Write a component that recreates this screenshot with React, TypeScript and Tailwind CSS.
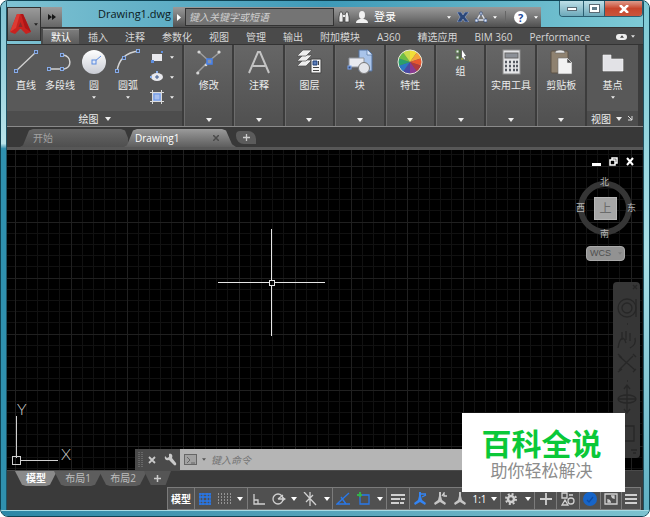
import type { ReactNode } from "react";
import clsx from "clsx";

const menuTabs = ["默认", "插入", "注释", "参数化", "视图", "管理", "输出", "附加模块", "A360", "精选应用", "BIM 360", "Performance"];

function Caret({ small = false, className }: { small?: boolean; className?: string }) {
  return (
    <svg viewBox="0 0 6 4" className={clsx("shrink-0", small ? "w-[4px] h-[3px]" : "w-[6px] h-[4px]", className)}>
      <path d="M0 0h6L3 4z" fill="currentColor" />
    </svg>
  );
}

function Node({ x, y }: { x: number; y: number }) {
  return <rect x={x - 1.5} y={y - 1.5} width="3" height="3" fill="#4a5468" stroke="#86abe8" />;
}

const LineIcon = () => (
  <svg className="w-[26px] h-[26px]" viewBox="0 0 26 26">
    <path d="M3 22L23 3" stroke="#d2d2d2" strokeWidth="1.3" />
    <Node x={3} y={22} />
    <Node x={23} y={3} />
  </svg>
);

const PolylineIcon = () => (
  <svg className="w-[26px] h-[26px]" viewBox="0 0 26 26" fill="none">
    <path d="M2 20H17c8-1 8-13-1-14" stroke="#d2d2d2" strokeWidth="1.5" />
    <Node x={2} y={20} />
    <Node x={15} y={20} />
    <Node x={15} y={6} />
  </svg>
);

const CircleIcon = () => (
  <svg className="w-[26px] h-[26px]" viewBox="0 0 26 26">
    <defs>
      <linearGradient id="disc" x1="0" y1="0" x2="0" y2="1">
        <stop offset="0" stopColor="#fff" />
        <stop offset="1" stopColor="#c9ccd4" />
      </linearGradient>
    </defs>
    <circle cx="13" cy="13" r="12" fill="url(#disc)" />
    <path d="M13 13L20 7" stroke="#5b8be0" />
    <rect x="11" y="11" width="4" height="4" fill="#dfe7f5" stroke="#5b8be0" />
  </svg>
);

const ArcIcon = () => (
  <svg className="w-[26px] h-[26px]" viewBox="0 0 26 26" fill="none">
    <path d="M2 23C3 11 11 3 24 2" stroke="#d2d2d2" strokeWidth="1.5" />
    <Node x={2} y={22} />
    <Node x={9} y={9} />
    <Node x={23} y={2} />
  </svg>
);

const ModifyIcon = () => (
  <svg className="w-[26px] h-[26px]" viewBox="0 0 26 26">
    <path d="M3 3L13 12 24 3M13 12L1 24" stroke="#9d9d9d" strokeWidth="1.5" fill="none" />
    <g fill="#d6d6d6">
      <circle cx="3" cy="3" r="1.6" />
      <circle cx="23" cy="3" r="1.6" />
      <circle cx="1.8" cy="24" r="1.6" />
      <circle cx="10" cy="16" r="1.3" />
    </g>
    <rect x="11" y="10" width="5" height="5" fill="#8a93a8" stroke="#4380ee" strokeWidth="1.5" />
  </svg>
);

const AnnotateIcon = () => (
  <svg className="w-[26px] h-[26px]" viewBox="0 0 26 26">
    <path d="M3 24L12 3h2l9 21M7 17h12" stroke="#c3c3c3" strokeWidth="2" fill="none" />
  </svg>
);

const LayersIcon = () => (
  <svg className="w-[26px] h-[26px]" viewBox="0 0 26 26">
    <g fill="#eeeeee" stroke="#4a4a4a" strokeWidth=".7">
      <path d="M1 17h9l6-6H7z" />
      <path d="M1 12h9l6-6H7z" />
      <path d="M1 7h9l6-6H7z" />
    </g>
    <path d="M15 10h10v14H15z" fill="#f4f4f4" stroke="#444" />
    <path d="M17 12h4v4h-4z" fill="#5a7cb8" stroke="#1d3c77" />
    <path d="M22.500 12v4M17 18.500h6M17 21.500h6" stroke="#444" />
  </svg>
);

const BlockIcon = () => (
  <svg className="w-[26px] h-[26px]" viewBox="0 0 26 26">
    <path d="M12 1h9l4 4v17H12z" fill="#a9c4ea" stroke="#55739f" />
    <path d="M20 1v5h5" fill="#dbe8fb" stroke="#55739f" strokeWidth=".7" />
    <path d="M2 9h15v9H2z" fill="#e8eaf0" stroke="#8f949d" />
    <circle cx="17" cy="19" r="5.500" fill="#e3e5ea" stroke="#777" />
    <rect x="1" y="17" width="3" height="3" fill="#354d7c" stroke="#7aa4ec" />
  </svg>
);

const wheel = [
  "#f2de38", "#f4a33c", "#e8572f", "#b23a3c", "#8a3b91", "#4a49a5", "#2c77c4", "#2aa06b", "#6dbd45", "#c7dc4b",
];

function WheelIcon() {
  return (
    <svg className="w-[26px] h-[26px]" viewBox="-13 -13 26 26">
      {wheel.map((color, i) => {
        const a = ((i * 36 - 90) * Math.PI) / 180;
        const b = (((i + 1) * 36 - 90) * Math.PI) / 180;
        return (
          <path
            key={color}
            d={`M0 0L${12 * Math.cos(a)} ${12 * Math.sin(a)}A12 12 0 0 1 ${12 * Math.cos(b)} ${12 * Math.sin(b)}z`}
            fill={color}
          />
        );
      })}
      <circle r="12" fill="none" stroke="#e9e9dc" strokeWidth="1" />
    </svg>
  );
}

const GroupIcon = () => (
  <svg className="w-[12px] h-[12px]" viewBox="0 0 12 12">
    <path d="M1 1h3v3H1zM1 7h3v3H1z" fill="#e8eef0" stroke="#5c7b4e" />
    <path d="M5 1v9" stroke="#3f6b33" />
    <path d="M7 1l4 6H9l1 3-1 .5L8 8 7 9z" fill="#fff" />
    <path d="M7 9v2" stroke="#c6c93d" />
  </svg>
);

const CalcIcon = () => (
  <svg className="w-[26px] h-[26px]" viewBox="0 0 26 26">
    <rect x="5" y="1" width="17" height="24" fill="#e4e5e7" stroke="#8c8c8c" />
    <rect x="7" y="4" width="13" height="5" fill="#8c9097" stroke="#666" />
    <path
      d="M7 13h2m2 0h2m2 0h2m1 0h2M7 17h2m2 0h2m2 0h2m1 0h2M7 21h2m2 0h2m2 0h2m1 0h2"
      stroke="#555a62"
      strokeWidth="2.500"
    />
  </svg>
);

const ClipboardIcon = () => (
  <svg className="w-[26px] h-[26px]" viewBox="0 0 26 26">
    <rect x="3" y="2" width="17" height="22" rx="1" fill="#8f8270" stroke="#5c5347" />
    <path d="M7 4c0-2 2-3 5-3s5 1 5 3z" fill="#e9e9e9" stroke="#666" strokeWidth=".6" />
    <path d="M10 9h9l5 5v11H10z" fill="#f3f3f3" stroke="#6d6d6d" strokeWidth=".6" />
    <path d="M19 9v5h5z" fill="#4b4b4b" stroke="#eee" strokeWidth=".6" />
  </svg>
);

const BaseIcon = () => (
  <svg className="w-[26px] h-[26px]" viewBox="0 0 26 26">
    <path d="M3 6h8v4h12v12H3z" fill="#e2e2e6" stroke="#f5f5f5" strokeWidth=".6" />
  </svg>
);

const smallTools = [
  {
    name: "矩形",
    icon: (
      <svg className="w-[14px] h-[14px]" viewBox="0 0 14 14">
        <rect x="2" y="4" width="10" height="7" fill="#e8e8ec" />
        <path d="M1 10h3v3H1zM11 1h2v2h-2z" fill="#5f8edd" />
      </svg>
    ),
  },
  {
    name: "椭圆",
    icon: (
      <svg className="w-[14px] h-[14px]" viewBox="0 0 14 14">
        <ellipse cx="7" cy="7" rx="6" ry="4" fill="#e8e8ec" />
        <path d="M7 5v4M5 7h4" stroke="#38598e" />
        <path d="M0 6h2v2H0zM6 1h2v2H6z" fill="#8bb0ee" />
      </svg>
    ),
  },
  {
    name: "图案填充",
    icon: (
      <svg className="w-[14px] h-[14px]" viewBox="0 0 14 14">
        <rect x="3" y="3" width="8" height="8" fill="#a9c0ee" />
        <path d="M2.500 0v14M11.500 0v14M0 2.500h14M0 11.500h14" stroke="#dcdcdc" />
        <rect x="4" y="4" width="6" height="6" fill="none" stroke="#6d96e4" />
      </svg>
    ),
  },
];

const drawTools = [
  { label: "直线", icon: <LineIcon />, menu: false },
  { label: "多段线", icon: <PolylineIcon />, menu: false },
  { label: "圆", icon: <CircleIcon />, menu: true },
  { label: "圆弧", icon: <ArcIcon />, menu: true },
];

const panels = [
  { label: "修改", icon: <ModifyIcon /> },
  { label: "注释", icon: <AnnotateIcon /> },
  { label: "图层", icon: <LayersIcon /> },
  { label: "块", icon: <BlockIcon /> },
  { label: "特性", icon: <WheelIcon /> },
  { label: "组", icon: <GroupIcon /> },
  { label: "实用工具", icon: <CalcIcon /> },
  { label: "剪贴板", icon: <ClipboardIcon /> },
];

function Header() {
  return (
    <header className="flex">
      <button
        aria-label="应用程序菜单"
        className="mt-[6px] w-[34px] h-[34px] shrink-0 flex items-center justify-center gap-[3px] border border-[#303030] bg-linear-to-b from-[#9a9a9a] to-[#5c5c5c] text-[#222]"
      >
        <svg className="w-[21px] h-[22px]" viewBox="0 0 21 22">
          <path d="M7 1h6l8 18-5 2-5-5h-1l-5 5-5-2z" fill="#c9221f" />
          <path d="M7 1h3L6 15l-6 4z" fill="#dd3b33" />
          <path d="M13 1l8 18-6-4-4-14z" fill="#ad1517" />
          <path d="M10.500 9l2 5h-4z" fill="#8a2a2a" />
        </svg>
        <Caret small />
      </button>

      <div className="flex-1 min-w-0">
        <div className="flex items-end h-[26px]">
          <button aria-label="快速访问" className="w-[21px] h-[20px] shrink-0 flex items-center justify-center bg-linear-to-b from-[#9b9b9b] to-[#666] text-[#161616]">
            <svg className="w-[8px] h-[6px]" viewBox="0 0 8 6">
              <path d="M0 0l4 3-4 3zM4 0l4 3-4 3z" fill="currentColor" />
            </svg>
          </button>
          <h1 className="w-[111px] shrink-0 pl-[36px] text-[11px] leading-[16px] mb-[5px] text-[#0b1b22] whitespace-nowrap">Drawing1.dwg</h1>
          <div className="flex flex-1 min-w-0 items-center h-[20px] bg-linear-to-b from-[#9a9a9a] via-[#777] to-[#505050] text-white">
            <button aria-label="展开" className="w-[12px] h-full shrink-0 flex items-center justify-center">
              <svg className="w-[4px] h-[7px]" viewBox="0 0 4 7"><path d="M0 0l4 3.500L0 7z" fill="#fff" /></svg>
            </button>
            <input
              type="text"
              aria-label="搜索"
              placeholder="键入关键字或短语"
              className="w-[149px] h-[18px] min-w-0 px-[3px] border border-[#333] bg-[#747474] text-[10px] italic placeholder:text-[#cfcfcf]"
            />
            <button aria-label="查找" className="w-[20px] shrink-0 flex justify-center">
              <svg className="w-[12px] h-[12px]" viewBox="0 0 12 12">
                <path d="M2 1h2l1 3v7H1V6zM8 1h2l1 5v5H7V4z" fill="#eee" stroke="#343434" strokeWidth=".7" />
                <path d="M5 5h2" stroke="#eee" strokeWidth="2" />
              </svg>
            </button>
            <button className="shrink-0 flex items-center gap-1 text-[11px] leading-[14px]">
              <svg className="w-[16px] h-[12px]" viewBox="0 0 16 12">
                <ellipse cx="8" cy="4" rx="3" ry="4" fill="#f2f2f2" />
                <path d="M2 12c0-3 3-4 5-4h2c2 0 5 1 5 4z" fill="#f2f2f2" />
              </svg>
              登录
            </button>
            <div className="flex-1" />
            <Caret small />
            <button aria-label="Exchange" className="w-[24px] shrink-0 flex justify-center">
              <svg className="w-[12px] h-[10px]" viewBox="0 0 12 10">
                <path d="M0 0h4l2 3 2-3h4L8 5l4 5H8L6 7l-2 3H0l3-5z" fill="#2b4779" stroke="#a9bbdd" strokeWidth=".5" />
              </svg>
            </button>
            <button aria-label="保持连接" className="shrink-0 flex items-center gap-[6px]">
              <svg className="w-[12px] h-[12px]" viewBox="0 0 12 12">
                <path d="M6 2l4 7H2z" fill="none" stroke="#dcdfe8" strokeWidth="1.500" />
                <path d="M5 1h2v3H5zM0 8h3v3H0zM9 8h3v3H9z" fill="#dde6f8" stroke="#2c4577" strokeWidth=".7" />
              </svg>
              <Caret small />
            </button>
            <span className="w-px h-[12px] mx-2 bg-[#666]" />
            <button aria-label="帮助" className="shrink-0 flex items-center gap-[7px] pr-[3px]">
              <span className="w-[13px] h-[13px] rounded-full bg-white text-[#1f4b99] text-[11px] leading-[13px] font-bold text-center">?</span>
              <Caret small />
            </button>
          </div>
          <div className="w-[18px] shrink-0" />
          <div className="flex shrink-0 self-start h-[16px] border border-t-0 border-[#2b5f72] rounded-b-sm overflow-hidden">
            <button aria-label="最小化" className="w-[23px] flex items-center justify-center bg-linear-to-b from-[#bfe0e8] to-[#6ca9ba]">
              <span className="w-[10px] h-[4px] bg-white border border-[#5b6b75]" />
            </button>
            <button aria-label="最大化" className="w-[22px] flex items-center justify-center border-x border-[#2b5f72] bg-linear-to-b from-[#bfe0e8] to-[#6ca9ba]">
              <span className="w-[9px] h-[7px] border-2 border-white bg-[#607c8a] outline outline-[#5b6b75]" />
            </button>
            <button aria-label="关闭" className="w-[37px] flex items-center justify-center bg-linear-to-b from-[#dd9b8c] via-[#c7452c] to-[#c9563c]">
              <svg className="w-[10px] h-[8px]" viewBox="0 0 10 8">
                <path d="M1 0l8 8M9 0L1 8" stroke="#fff" strokeWidth="2.500" />
              </svg>
            </button>
          </div>
        </div>

        <nav className="flex h-[17px] items-end gap-px pl-[2px] bg-[#4a4a4a] border-t border-[#333]">
          {menuTabs.map((tab, i) => (
            <button
              key={tab}
              className={clsx(
                "h-[15px] px-2 text-[10px] leading-[12px] whitespace-nowrap",
                i === 0 ? "bg-linear-to-b from-[#7c7c7c] to-[#5b5b5b] border-t border-[#999] text-white" : "border-t border-transparent text-[#d6d6d6]",
              )}
            >
              {tab}
            </button>
          ))}
          <button aria-label="最小化功能区" className="ml-auto mr-2 h-[15px] flex items-center gap-1 text-[#ddd]">
            <span className="w-[11px] h-[6px] rounded-sm bg-[#eee] flex items-center justify-center text-[#444]">
              <Caret small className="rotate-180" />
            </span>
            <Caret small />
          </button>
        </nav>
      </div>
    </header>
  );
}

function Ribbon() {
  return (
    <section className="flex gap-[2px] h-[83px] pr-[5px] bg-[#3c3c3c] border-t border-b border-t-[#333] border-b-[#8a8a8a] text-[10px] leading-[14px] text-[#ececec]">
      <div className="w-[175px] shrink-0 flex flex-col bg-[#595959]">
        <div className="flex-1 flex pl-[2px] pt-[4px]">
          {drawTools.map((t) => (
            <button key={t.label} className="w-[34px] shrink-0 flex flex-col items-center">
              {t.icon}
              <span className="mt-[3px] whitespace-nowrap">{t.label}</span>
              {t.menu && <Caret small className="mt-[4px]" />}
            </button>
          ))}
          <div className="flex flex-col gap-[6px] pt-px ml-[5px]">
            {smallTools.map((t) => (
              <button key={t.name} aria-label={t.name} className="flex items-center gap-[6px]">
                {t.icon}
                <Caret small />
              </button>
            ))}
          </div>
        </div>
        <button className="h-[15px] flex items-center justify-center gap-[6px] bg-[#4d4d4d]">
          绘图 <Caret />
        </button>
      </div>

      {panels.map((p) => (
        <button
          key={p.label}
          className="flex-1 min-w-0 flex flex-col items-center py-[4px] bg-linear-to-b from-[#666] to-[#505050] border-l border-[#6c6c6c]"
        >
          {p.icon}
          <span className="mt-[3px] whitespace-nowrap">{p.label}</span>
          <Caret className="mt-auto" />
        </button>
      ))}

      <div className="w-[51px] shrink-0 flex flex-col bg-[#585858]">
        <button className="flex-1 flex flex-col items-center pt-[4px]">
          <BaseIcon />
          <span className="mt-[3px]">基点</span>
          <Caret small className="mt-[4px]" />
        </button>
        <button className="h-[15px] flex items-center pl-[4px] gap-[5px] bg-[#4d4d4d]">
          视图 <Caret />
          <svg className="w-[5px] h-[5px] ml-px" viewBox="0 0 5 5"><path d="M0 0l4 4M4 0v4H0" stroke="#ddd" fill="none" /></svg>
        </button>
      </div>
    </section>
  );
}

function FileTabs() {
  return (
    <div className="flex items-end h-[23px] pl-[13px] bg-[#383838] border-b-3 border-[#575757] leading-[16px]">
      <button className="w-[108px] h-[18px] pl-[13px] text-left text-[10px] text-[#a2a2a2] bg-linear-to-b from-[#666] to-[#4f4f4f] [clip-path:polygon(0_100%,3px_90%,9px_8%,13px_0,101px_0,105px_8%,108px_50%,100%_100%)]">
        开始
      </button>
      <div className="-ml-[4px] w-[112px] h-[18px] pl-[11px] pr-[17px] flex items-center justify-between bg-linear-to-b from-[#9b9b9b] to-[#5e5e5e] text-white [clip-path:polygon(0_100%,3px_90%,9px_8%,13px_0,98px_0,102px_8%,108px_85%,100%_100%)]">
        <button className="text-[10px]">Drawing1</button>
        <button aria-label="关闭图形" className="text-[#4b4b4b]">
          <svg className="w-[6px] h-[6px]" viewBox="0 0 7 7"><path d="M0 0l7 7M7 0L0 7" stroke="currentColor" strokeWidth="1.800" /></svg>
        </button>
      </div>
      <button aria-label="新图形" className="mb-[3px] w-[20px] h-[13px] rounded-tl-sm rounded-tr-lg rounded-bl-lg bg-[#5b5b5b] flex items-center justify-center">
        <svg className="w-[7px] h-[7px]" viewBox="0 0 7 7"><path d="M3.500 0v7M0 3.500h7" stroke="#ccc" strokeWidth="1.300" /></svg>
      </button>
    </div>
  );
}

function ViewCube() {
  return (
    <div className="absolute right-[7px] top-[27px] w-[62px] h-[62px] text-[9px] leading-[10px] text-[#b5b5b5]">
      <svg className="absolute inset-0" viewBox="0 0 62 62">
        <circle cx="31" cy="31" r="24" fill="none" stroke="#353535" strokeWidth="6" />
      </svg>
      <button className="absolute left-[20px] top-[20px] w-[23px] h-[23px] bg-[#a6a6a6] border border-[#b8b8b8] text-[12px] leading-[20px] text-[#6b6b6b]">上</button>
      <span className="absolute left-[26px] top-0">北</span>
      <span className="absolute left-[26px] bottom-0">南</span>
      <span className="absolute left-[2px] top-[26px]">西</span>
      <span className="absolute right-0 top-[26px]">东</span>
    </div>
  );
}

function NavBar() {
  return (
    <div className="absolute right-[3px] top-[132px] w-[27px] h-[176px] rounded-sm bg-[#363636]">
      <svg className="w-full h-full" viewBox="0 0 27 176" fill="none" stroke="#272727" strokeWidth="1.300">
        <path d="M20 3l4 4M24 3l-4 4" />
        <circle cx="14" cy="26" r="9" />
        <circle cx="14" cy="26" r="5" />
        <path d="M23 17v18M14 42h1M14 99h1" />
        <path d="M5 66c2-12 6-12 8-5M9 58v-8m4 8V49m4 10v-8m0 15c4-2 6-6 5-10" />
        <path d="M6 74l16 14M20 74L6 88M20 72l3 3M5 72l4 4M5 90l4-3M20 90l3-3" />
        <path d="M14 104v26M5 117h18M11 107l3-4 3 4M11 127l3 4 3-4" />
        <ellipse cx="14" cy="117" rx="9" ry="4" />
        <path d="M8 144h13v15H8zM18 168h6M20 171h3" />
      </svg>
    </div>
  );
}

function CommandLine() {
  return (
    <div className="absolute left-[128px] right-[40px] bottom-0 h-[21px] flex">
      <div className="w-[45px] shrink-0 flex items-center bg-[#4a4a4a] text-[#c9c9c9]">
        <svg className="w-[5px] h-[15px] ml-[3px]" viewBox="0 0 5 15">
          <path d="M1 0v15M4 0v15" stroke="#858585" strokeDasharray="1 1" />
        </svg>
        <button aria-label="关闭命令行" className="ml-[5px]">
          <svg className="w-[8px] h-[8px]" viewBox="0 0 8 8"><path d="M1 1l6 6M7 1L1 7" stroke="currentColor" strokeWidth="1.800" /></svg>
        </button>
        <button aria-label="自定义" className="ml-[8px]">
          <svg className="w-[13px] h-[13px]" viewBox="0 0 13 13">
            <path d="M1 3l2 2 2-1V1C8 0 9 3 8 5l4 5c1 2-1 3-2 2L5 7C2 8 0 6 1 3z" fill="currentColor" />
          </svg>
        </button>
      </div>
      <div className="flex-1 min-w-0 flex items-center bg-[#b5b5b5] text-[#555]">
        <button aria-label="最近使用的命令" className="ml-[4px] flex items-center gap-[5px]">
          <svg className="w-[13px] h-[11px]" viewBox="0 0 13 11" fill="none" stroke="#666">
            <rect x=".5" y=".5" width="12" height="10" fill="#a1a1a1" />
            <path d="M3 3l3 3-3 3M7 9h4" />
          </svg>
          <Caret small />
        </button>
        <input
          type="text"
          aria-label="命令"
          placeholder="键入命令"
          className="ml-[5px] w-[220px] min-w-0 text-[10px] italic leading-[16px] bg-transparent placeholder:text-[#737373]"
        />
      </div>
    </div>
  );
}

function Canvas() {
  return (
    <main className="relative flex-1 min-h-[319px] bg-black overflow-hidden">
      <svg className="absolute inset-0 w-full h-full">
        <defs>
          <pattern id="grid" x="8" y="16" width="56" height="56" patternUnits="userSpaceOnUse">
            <path d="M11.500 0v56M22.500 0v56M33.500 0v56M44.500 0v56M0 11.500h56M0 22.500h56M0 33.500h56M0 44.500h56" stroke="#111" />
            <path d="M.5 0v56M0 .5h56" stroke="#202020" />
          </pattern>
        </defs>
        <rect width="100%" height="100%" fill="url(#grid)" />
        <path d="M264.500 79v51M264.500 135v51M211 132.500h51M267 132.500h51" stroke="#e6e6e6" />
        <rect x="262.500" y="130.500" width="5" height="5" stroke="#e6e6e6" fill="none" />
      </svg>

      <svg className="absolute left-[4px] bottom-[4px] w-[72px] h-[72px]" viewBox="0 0 72 72" fill="none" stroke="#d0d0d0">
        <path d="M5.500 22v42M10 66.500h37" />
        <rect x="1.500" y="62.500" width="8" height="8" />
        <text x="6" y="21" fill="#d0d0d0" stroke="none" fontSize="16" className="font-['Lato',sans-serif] font-light">Y</text>
        <text x="50" y="66" fill="#d0d0d0" stroke="none" fontSize="16" className="font-['Lato',sans-serif] font-light">X</text>
      </svg>

      <div className="absolute right-[9px] top-[7px] flex items-center gap-[8px] text-white">
        <button aria-label="最小化图形"><svg className="w-[9px] h-[9px]" viewBox="0 0 9 9"><path d="M0 7.500h9" stroke="currentColor" strokeWidth="3" /></svg></button>
        <button aria-label="还原图形">
          <svg className="w-[9px] h-[9px]" viewBox="0 0 9 9" fill="none" stroke="currentColor" strokeWidth="1.500">
            <path d="M1 3h5v5H1zM3 3V1h5v5H6" />
          </svg>
        </button>
        <button aria-label="关闭图形窗口"><svg className="w-[8px] h-[9px]" viewBox="0 0 8 9"><path d="M1 1l6 7M7 1L1 8" stroke="currentColor" strokeWidth="2" /></svg></button>
      </div>

      <ViewCube />
      <button className="absolute right-[18px] top-[96px] w-[39px] h-[15px] pl-[3px] rounded-sm flex items-center gap-[7px] bg-[#929292] border border-[#aaa] text-[9px] font-['Liberation_Sans',sans-serif] text-[#4e4e4e]">
        WCS <Caret small className="text-[#7d7d7d]" />
      </button>
      <NavBar />
      <CommandLine />
    </main>
  );
}

const cell = "h-full shrink-0 flex items-center justify-center";

function Tool({ name, width, children }: { name: string; width: string; children: ReactNode }) {
  return (
    <button aria-label={name} className={clsx(cell, width)}>
      {children}
    </button>
  );
}

function Icon({ children, color = "#d0d0d0" }: { children: ReactNode; color?: string }) {
  return (
    <svg className="w-[14px] h-[14px] shrink-0" viewBox="0 0 14 14" fill="none" stroke={color} strokeWidth="1.300">
      {children}
    </svg>
  );
}

function Group({ children }: { children: ReactNode }) {
  return <div className="flex h-full shrink-0 items-center border-l border-[#7b7b7b]">{children}</div>;
}

const Figure = () => (
  <path d="M6 0h2v4l1 4 4 3-1 2-5-3-5 3-1-2 4-3 1-4z" fill="currentColor" stroke="none" />
);

function StatusBar() {
  return (
    <div className="flex self-end h-[23px] mr-[2px] border border-l-0 border-[#7b7b7b] bg-[#505050] text-[10px] leading-[14px] text-white">
      <Group><button className="w-[26px] font-bold">模型</button></Group>
      <Group>
        <Tool name="栅格" width="w-[19px]">
          <Icon color="#2878ea"><path d="M2 1v12M5 1v12M9 1v12M12 1v12M1 2h12M1 5h12M1 9h12M1 12h12" /></Icon>
        </Tool>
        <Tool name="捕捉" width="w-[19px]">
          <Icon color="#aaa"><path d="M1 2h13M1 5h13M1 8h13M1 11h13" strokeDasharray="1 2" /></Icon>
        </Tool>
        <Tool name="捕捉设置" width="w-[14px]"><Caret /></Tool>
      </Group>
      <Group>
        <Tool name="正交" width="w-[21px]"><Icon><path d="M2 2v10h11M2 8h4v4" /></Icon></Tool>
        <Tool name="极轴追踪" width="w-[19px]"><Icon><circle cx="6" cy="7" r="5" /><path d="M6 7h7M6 7l5-4M10 5l3 2-3 2" /></Icon></Tool>
        <Tool name="极轴设置" width="w-[11px]"><Caret /></Tool>
        <Tool name="等轴测" width="w-[22px]"><Icon><path d="M7 0v14M1 0l12 13M3 10L10 3" /></Icon></Tool>
        <Tool name="等轴测设置" width="w-[11px]"><Caret /></Tool>
      </Group>
      <Group>
        <Tool name="对象捕捉追踪" width="w-[20px]"><Icon color="#2878ea"><path d="M13 1L1 12h13M5 5l5 7" /></Icon></Tool>
        <Tool name="对象捕捉" width="w-[21px]">
          <Icon color="#2878ea"><path d="M3 3h9v9H3z" /><path d="M0 3h5M3 0v5" stroke="#33b24a" strokeWidth="2" /></Icon>
        </Tool>
        <Tool name="对象捕捉设置" width="w-[12px]"><Caret /></Tool>
      </Group>
      <Group>
        <Tool name="线宽" width="w-[22px]"><Icon><path d="M0 3h14M0 7h9M10 7h4M0 11h8M9 11h4" strokeWidth="2" /></Icon></Tool>
      </Group>
      <Group>
        <Tool name="注释可见性" width="w-[20px]">
          <span className="text-[#3384f3]"><Icon color="#3384f3"><Figure /><path d="M8 2h5M9 5l4-2" /></Icon></span>
        </Tool>
        <Tool name="自动缩放" width="w-[20px]">
          <span className="text-[#c4c4c4]"><Icon><Figure /><path d="M9 4l2-3v3h3" /></Icon></span>
        </Tool>
        <Tool name="注释比例" width="w-[19px]"><span className="text-[#c4c4c4]"><Icon><Figure /></Icon></span></Tool>
        <button className={clsx(cell, "w-[31px] gap-[4px]")}>1:1 <Caret /></button>
      </Group>
      <Group>
        <Tool name="切换工作空间" width="w-[20px]">
          <Icon><circle cx="7" cy="7" r="3" strokeWidth="2.500" /><circle cx="7" cy="7" r="5" strokeWidth="2" strokeDasharray="2 1.930" /></Icon>
        </Tool>
        <Tool name="工作空间菜单" width="w-[13px]"><Caret /></Tool>
      </Group>
      <Group><Tool name="注释监视器" width="w-[21px]"><Icon><path d="M7 1v12M1 7h12" strokeWidth="1.800" /></Icon></Tool></Group>
      <Group><Tool name="隔离对象" width="w-[22px]"><Icon><path d="M1 1h5v5H1zM8 3h4M4 8l3 5H1z" /><circle cx="10" cy="9" r="3" /></Icon></Tool></Group>
      <Group>
        <Tool name="硬件加速" width="w-[20px]">
          <Icon><circle cx="7" cy="7" r="7" fill="#1765c8" stroke="none" /><path d="M4 8l2 2 4-5" stroke="#0d4ca4" /></Icon>
        </Tool>
      </Group>
      <Group><Tool name="全屏显示" width="w-[20px]"><Icon><path d="M1 2h12v10H1z" /><path d="M4 7v3h3M10 7V4H7M4 10l2-2M10 4L8 6" /></Icon></Tool></Group>
      <Group><Tool name="自定义状态栏" width="w-[18px]"><Icon><path d="M1 3h12M1 7h12M1 11h12" strokeWidth="1.800" /></Icon></Tool></Group>
    </div>
  );
}

function Footer() {
  return (
    <footer className="flex flex-col bg-[#3a3a3a]">
      <div className="flex h-[17px] pl-[8px] border-t border-[#4a4a4a] text-[10px] leading-[15px]">
        {["模型", "布局1", "布局2"].map((name, i) => (
          <button
            key={name}
            className={clsx(
              "h-[15px] -mr-[3px] [clip-path:polygon(0_0,100%_0,calc(100%-7px)_92%,calc(100%-11px)_100%,11px_100%,7px_92%)]",
              i === 0 ? "w-[42px] bg-[#8a8a8a] font-bold text-white" : "w-[48px] bg-[#5d5d5d] text-[#bdbdbd]",
            )}
          >
            {name}
          </button>
        ))}
        <button aria-label="新建布局" className="w-[27px] h-[14px] flex items-center justify-center bg-[#555] [clip-path:polygon(0_0,100%_0,80%_100%,25%_100%)]">
          <svg className="w-[7px] h-[7px]" viewBox="0 0 7 7"><path d="M3.500 0v7M0 3.500h7" stroke="#ccc" strokeWidth="1.500" /></svg>
        </button>
      </div>
      <StatusBar />
    </footer>
  );
}

export default function App() {
  return (
    <div className="relative min-h-screen flex flex-col overflow-hidden rounded-lg border border-[#0e4354] bg-linear-to-r from-[#7fc3d3] via-[#3d9ab8] to-[#7fcbd6] font-['Open_Sans','Noto_Sans_CJK_SC',sans-serif]">
      <div className="flex-1 flex">
        <div className="w-[6px] shrink-0 border-r border-[#1f5263] bg-linear-to-b from-[#7fc3d3] from-0% via-[#b9e4ea] via-28% to-[#2f90ae] to-29%" />
        <div className="flex-1 min-w-0 flex flex-col">
          <Header />
          <Ribbon />
          <FileTabs />
          <Canvas />
          <Footer />
        </div>
        <div className="w-[6px] shrink-0 border-l border-[#1f5263] bg-linear-to-b from-[#7fcbd6] via-[#a8dfe6] to-[#5fb0c3]" />
      </div>
      <div className="h-[6px] shrink-0 border-t border-[#a5dbe4] bg-linear-to-r from-[#2b87a6] to-[#7cc2cf]" />

      <aside className="absolute right-[24px] bottom-[24px] w-[163px] h-[79px] pr-[4px] bg-white flex flex-col items-center justify-center font-['Noto_Sans_CJK_SC',sans-serif]">
        <strong className="text-[30px] leading-[34px] font-bold text-[#0ac838]">百科全说</strong>
        <span className="text-[17px] leading-[22px] text-[#8c8c8c]">助你轻松解决</span>
      </aside>
    </div>
  );
}
